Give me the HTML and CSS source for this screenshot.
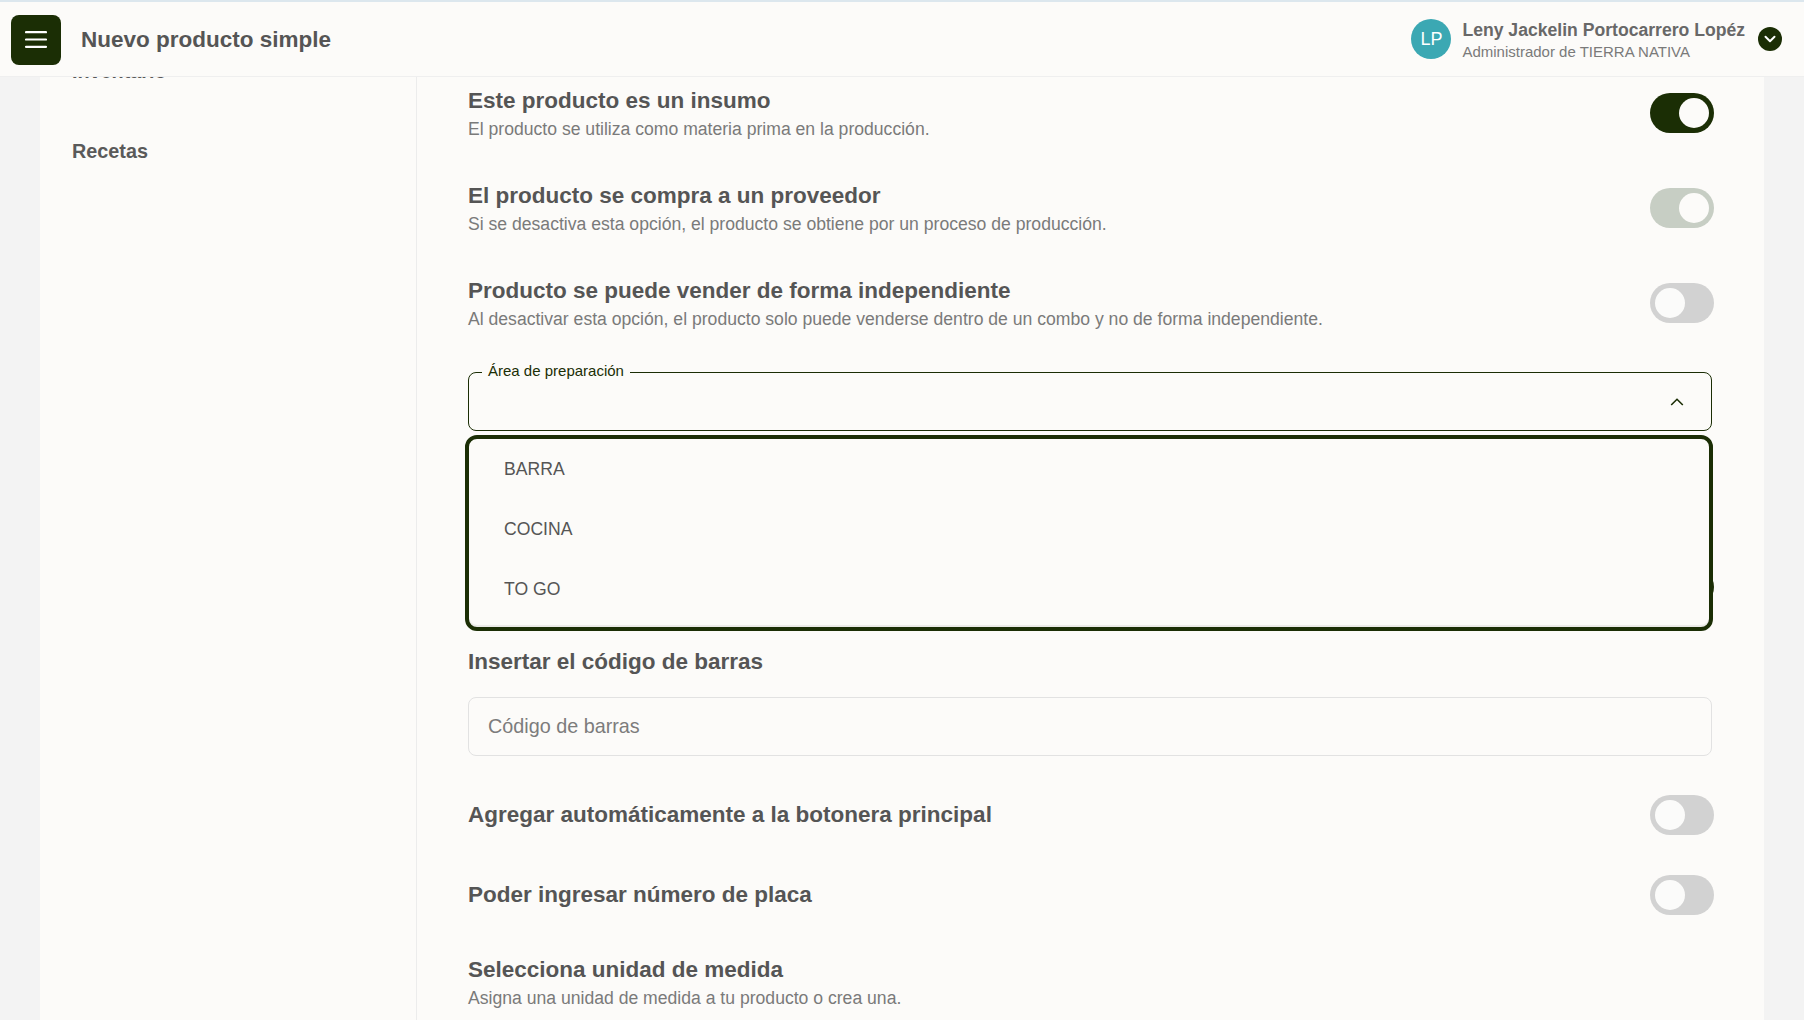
FILE: index.html
```html
<!DOCTYPE html>
<html lang="es">
<head>
<meta charset="utf-8">
<title>Nuevo producto simple</title>
<link rel="stylesheet" href="styles.css">
</head>
<body>
<header class="topbar">
  <button class="menu-btn" aria-label="Menú">
    <svg width="22" height="17" viewBox="0 0 22 17"><path d="M1 1.2H21M1 8.5H21M1 15.8H21" stroke="#fff" stroke-width="2.2" stroke-linecap="round" fill="none"/></svg>
  </button>
  <h1 class="page-title">Nuevo producto simple</h1>
  <div class="user">
    <div class="avatar">LP</div>
    <div class="user-text">
      <div class="user-name">Leny Jackelin Portocarrero Lopéz</div>
      <div class="user-role">Administrador de TIERRA NATIVA</div>
    </div>
    <span class="user-caret">
      <svg width="12" height="8" viewBox="0 0 12 8"><path d="M1.5 1.8L6 6.2L10.5 1.8" stroke="#fff" stroke-width="2" stroke-linecap="round" stroke-linejoin="round" fill="none"/></svg>
    </span>
  </div>
</header>
<div class="layout">
  <aside class="sidebar">
    <nav class="side-nav">
      <a class="side-link">Inventario</a>
      <a class="side-link">Recetas</a>
    </nav>
  </aside>
  <main class="content">
    <div class="row row-desc-row">
      <div class="row-text">
        <div class="row-title">Este producto es un insumo</div>
        <div class="row-desc">El producto se utiliza como materia prima en la producción.</div>
      </div>
      <span class="toggle on"><span class="knob"></span></span>
    </div>
    <div class="row row-desc-row">
      <div class="row-text">
        <div class="row-title">El producto se compra a un proveedor</div>
        <div class="row-desc">Si se desactiva esta opción, el producto se obtiene por un proceso de producción.</div>
      </div>
      <span class="toggle on disabled"><span class="knob"></span></span>
    </div>
    <div class="row row-desc-row">
      <div class="row-text">
        <div class="row-title">Producto se puede vender de forma independiente</div>
        <div class="row-desc">Al desactivar esta opción, el producto solo puede venderse dentro de un combo y no de forma independiente.</div>
      </div>
      <span class="toggle"><span class="knob"></span></span>
    </div>

    <div class="select">
      <span class="select-label">Área de preparación</span>
      <svg class="select-caret" width="14" height="8" viewBox="0 0 14 8"><path d="M1.2 7L7 1.3L12.8 7" stroke="#1b2e05" stroke-width="1.6" fill="none"/></svg>
      <ul class="menu">
        <li class="menu-item">BARRA</li>
        <li class="menu-item">COCINA</li>
        <li class="menu-item">TO GO</li>
      </ul>
    </div>

    <div class="row row-hidden">
      <span class="toggle on"><span class="knob"></span></span>
    </div>

    <div class="field-title">Insertar el código de barras</div>
    <div class="input">Código de barras</div>

    <div class="row row-single">
      <div class="row-title">Agregar automáticamente a la botonera principal</div>
      <span class="toggle"><span class="knob"></span></span>
    </div>
    <div class="row row-single">
      <div class="row-title">Poder ingresar número de placa</div>
      <span class="toggle"><span class="knob"></span></span>
    </div>
    <div class="row-text unit-block">
      <div class="row-title">Selecciona unidad de medida</div>
      <div class="row-desc">Asigna una unidad de medida a tu producto o crea una.</div>
    </div>
  </main>
</div>
</body>
</html>
```

FILE: styles.css
```css
* { box-sizing: border-box; }
html, body { margin: 0; padding: 0; }
body {
  width: 1804px;
  height: 1020px;
  overflow: hidden;
  background: #f3f3f3;
  font-family: "Liberation Sans", Arial, Helvetica, sans-serif;
  color: #555;
}

.topbar {
  position: relative;
  z-index: 2;
  height: 77px;
  border-top: 2px solid #dce7ee;
  border-bottom: 1px solid #efefef;
  background: #fcfbf9;
  display: flex;
  align-items: center;
  padding: 0 22px 0 11px;
}
.menu-btn {
  width: 50px;
  height: 50px;
  border: 0;
  border-radius: 8px;
  background: #1b2e05;
  display: flex;
  align-items: center;
  justify-content: center;
  padding: 0;
  margin-top: 1px;
}
.page-title {
  margin: 2px 0 0 20px;
  font-size: 22.5px;
  font-weight: 700;
  color: #555;
  line-height: 28px;
}
.user {
  margin-left: auto;
  display: flex;
  align-items: center;
}
.avatar {
  width: 40px;
  height: 40px;
  border-radius: 50%;
  background: #3ba8b3;
  color: #fff;
  font-size: 18px;
  display: flex;
  align-items: center;
  justify-content: center;
  margin-right: 11px;
}
.user-text {
  display: flex;
  flex-direction: column;
  padding-top: 3px;
}
.user-name {
  font-size: 17.6px;
  font-weight: 700;
  color: #686868;
  line-height: 22px;
}
.user-role {
  font-size: 15px;
  color: #7a7a7a;
  line-height: 22px;
}
.user-caret {
  width: 24px;
  height: 24px;
  border-radius: 50%;
  background: #1b2e05;
  display: flex;
  align-items: center;
  justify-content: center;
  margin-left: 13px;
}

.layout {
  height: 943px;
  overflow: hidden;
  display: flex;
  padding: 0 40px;
}
.sidebar {
  width: 377px;
  flex: none;
  background: #fcfbf9;
  border-right: 1px solid #ececec;
}
.side-nav {
  display: flex;
  flex-direction: column;
  gap: 56px;
  margin-top: -18px;
  padding-left: 32px;
}
.side-link {
  font-size: 19.8px;
  font-weight: 700;
  line-height: 24px;
  color: #5a5a5a;
}

.content {
  flex: 1;
  background: #fcfbf9;
  padding: 10px 50px 0 51px;
  display: flex;
  flex-direction: column;
}

.row {
  display: flex;
  align-items: center;
  justify-content: space-between;
  margin-bottom: 39px;
}
.row-desc-row .toggle { margin-top: -4px; }
.row-text {
  display: flex;
  flex-direction: column;
}
.row-title {
  font-size: 22.5px;
  font-weight: 700;
  line-height: 28px;
  color: #555;
}
.row-desc {
  font-size: 17.6px;
  line-height: 28px;
  color: #7a7a7a;
}

.toggle {
  width: 64px;
  height: 40px;
  border-radius: 20px;
  background: #d2d2d2;
  display: flex;
  align-items: center;
  padding: 0 5px;
  flex: none;
}
.toggle.on {
  background: #1b2e05;
  justify-content: flex-end;
}
.toggle.on.disabled { background: #c7cec4; }
.knob {
  width: 30px;
  height: 30px;
  border-radius: 50%;
  background: #fbfbfa;
}
.toggle.on .knob { background: #fcfbf9; }

.select {
  position: relative;
  z-index: 1;
  height: 59px;
  margin: 0 2px 0 0;
  border: 1px solid #1b2e05;
  border-radius: 8px;
  display: flex;
  align-items: center;
  justify-content: flex-end;
  padding-right: 27px;
}
.select-label {
  position: absolute;
  left: 13px;
  top: -11px;
  padding: 0 6px;
  line-height: 18px;
  font-size: 15px;
  color: #1b2e05;
  background: #fcfbf9;
}
.menu {
  position: absolute;
  top: calc(100% + 5px);
  left: -4px;
  right: -2px;
  height: 196px;
  margin: 0;
  padding: 0 0 8px;
  list-style: none;
  background: #fcfbf9;
  border: 4px solid #1b2e05;
  border-radius: 12px;
  box-shadow: inset 0 -2px 1px rgba(0, 0, 0, 0.07);
}
.menu-item {
  height: 60px;
  display: flex;
  align-items: center;
  padding-left: 35px;
  font-size: 17.6px;
  color: #555;
}
.menu-item:first-child { padding-top: 1px; }

.row-hidden {
  justify-content: flex-end;
  margin-top: 136px;
  margin-bottom: 41px;
}

.field-title {
  font-size: 22.5px;
  font-weight: 700;
  line-height: 28px;
  color: #555;
}
.input {
  margin: 21px 2px 0 0;
  height: 59px;
  border: 1px solid #e2e2e2;
  border-radius: 8px;
  display: flex;
  align-items: center;
  padding-left: 19px;
  font-size: 19.8px;
  color: #7c7c7c;
}

.row-single { margin-bottom: 40px; }
.input + .row-single { margin-top: 39px; }
.unit-block { margin-top: 1px; }
```
